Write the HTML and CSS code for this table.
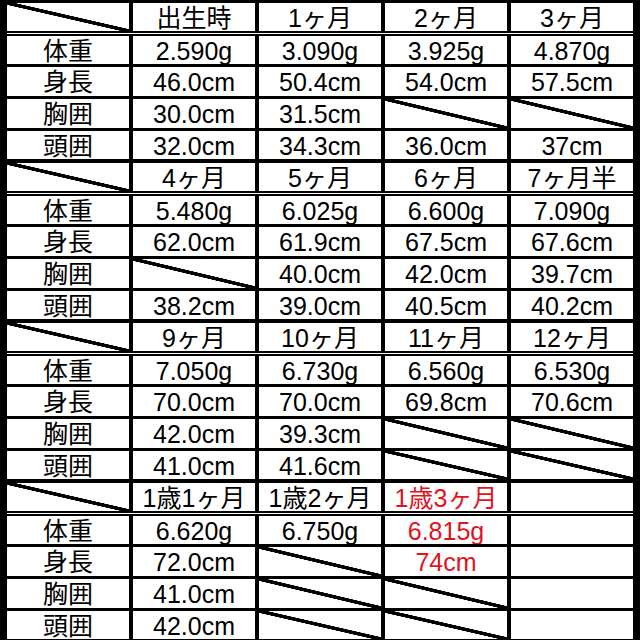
FILE: index.html
```html
<!DOCTYPE html>
<html lang="ja">
<head>
<meta charset="utf-8">
<title>成長記録</title>
<link rel="stylesheet" href="styles.css">
</head>
<body>
<div class="sheet">
  <section class="block">
    <div class="head">
      <div class="c x"></div><div class="c">出生時</div><div class="c">1ヶ月</div><div class="c">2ヶ月</div><div class="c">3ヶ月</div>
    </div>
    <div class="sep"></div>
    <div class="rows">
      <div class="c">体重</div><div class="c">2.590g</div><div class="c">3.090g</div><div class="c">3.925g</div><div class="c">4.870g</div>
      <div class="c">身長</div><div class="c">46.0cm</div><div class="c">50.4cm</div><div class="c">54.0cm</div><div class="c">57.5cm</div>
      <div class="c">胸囲</div><div class="c">30.0cm</div><div class="c">31.5cm</div><div class="c x"></div><div class="c x"></div>
      <div class="c">頭囲</div><div class="c">32.0cm</div><div class="c">34.3cm</div><div class="c">36.0cm</div><div class="c">37cm</div>
    </div>
  </section>
  <section class="block">
    <div class="head">
      <div class="c x"></div><div class="c">4ヶ月</div><div class="c">5ヶ月</div><div class="c">6ヶ月</div><div class="c">7ヶ月半</div>
    </div>
    <div class="sep"></div>
    <div class="rows">
      <div class="c">体重</div><div class="c">5.480g</div><div class="c">6.025g</div><div class="c">6.600g</div><div class="c">7.090g</div>
      <div class="c">身長</div><div class="c">62.0cm</div><div class="c">61.9cm</div><div class="c">67.5cm</div><div class="c">67.6cm</div>
      <div class="c">胸囲</div><div class="c x"></div><div class="c">40.0cm</div><div class="c">42.0cm</div><div class="c">39.7cm</div>
      <div class="c">頭囲</div><div class="c">38.2cm</div><div class="c">39.0cm</div><div class="c">40.5cm</div><div class="c">40.2cm</div>
    </div>
  </section>
  <section class="block">
    <div class="head">
      <div class="c x"></div><div class="c">9ヶ月</div><div class="c">10ヶ月</div><div class="c">11ヶ月</div><div class="c">12ヶ月</div>
    </div>
    <div class="sep"></div>
    <div class="rows">
      <div class="c">体重</div><div class="c">7.050g</div><div class="c">6.730g</div><div class="c">6.560g</div><div class="c">6.530g</div>
      <div class="c">身長</div><div class="c">70.0cm</div><div class="c">70.0cm</div><div class="c">69.8cm</div><div class="c">70.6cm</div>
      <div class="c">胸囲</div><div class="c">42.0cm</div><div class="c">39.3cm</div><div class="c x"></div><div class="c x"></div>
      <div class="c">頭囲</div><div class="c">41.0cm</div><div class="c">41.6cm</div><div class="c x"></div><div class="c x"></div>
    </div>
  </section>
  <section class="block">
    <div class="head">
      <div class="c x"></div><div class="c">1歳1ヶ月</div><div class="c">1歳2ヶ月</div><div class="c red">1歳3ヶ月</div><div class="c"></div>
    </div>
    <div class="sep"></div>
    <div class="rows">
      <div class="c">体重</div><div class="c">6.620g</div><div class="c">6.750g</div><div class="c red">6.815g</div><div class="c"></div>
      <div class="c">身長</div><div class="c">72.0cm</div><div class="c x"></div><div class="c red">74cm</div><div class="c"></div>
      <div class="c">胸囲</div><div class="c">41.0cm</div><div class="c x"></div><div class="c x"></div><div class="c"></div>
      <div class="c">頭囲</div><div class="c">42.0cm</div><div class="c x"></div><div class="c x"></div><div class="c"></div>
    </div>
  </section>
</div>
</body>
</html>
```

FILE: styles.css
```css
html, body {
  margin: 0;
  padding: 0;
  background: #000;
}

.sheet {
  width: 640px;
  height: 640px;
  box-sizing: border-box;
  padding: 3px 7px 0 7px;
  background: #000;
  overflow: hidden;
  display: flex;
  flex-direction: column;
  gap: 4px;
  font-family: "Liberation Sans", "Noto Sans CJK JP", sans-serif;
  font-size: 25px;
  color: #000;
}

.block {
  display: flex;
  flex-direction: column;
}

.head {
  display: grid;
  grid-template-columns: repeat(5, 122px);
  grid-template-rows: 28px;
  column-gap: 4px;
}

.sep {
  height: 1px;
  border-top: 2px solid #000;
  border-bottom: 2px solid #000;
  background: #fff;
}

.rows {
  display: grid;
  grid-template-columns: repeat(5, 122px);
  grid-template-rows: 28px 29px 29px 28px;
  column-gap: 4px;
  row-gap: 3px;
}

.c {
  background: #fff;
  text-align: center;
  line-height: 30px;
  white-space: nowrap;
  overflow: hidden;
}

.x {
  background: linear-gradient(to top right,
    #fff calc(50% - 2px),
    #000 calc(50% - 1.6px),
    #000 calc(50% + 1.6px),
    #fff calc(50% + 2px));
}

.red {
  color: #e0141c;
}
```
